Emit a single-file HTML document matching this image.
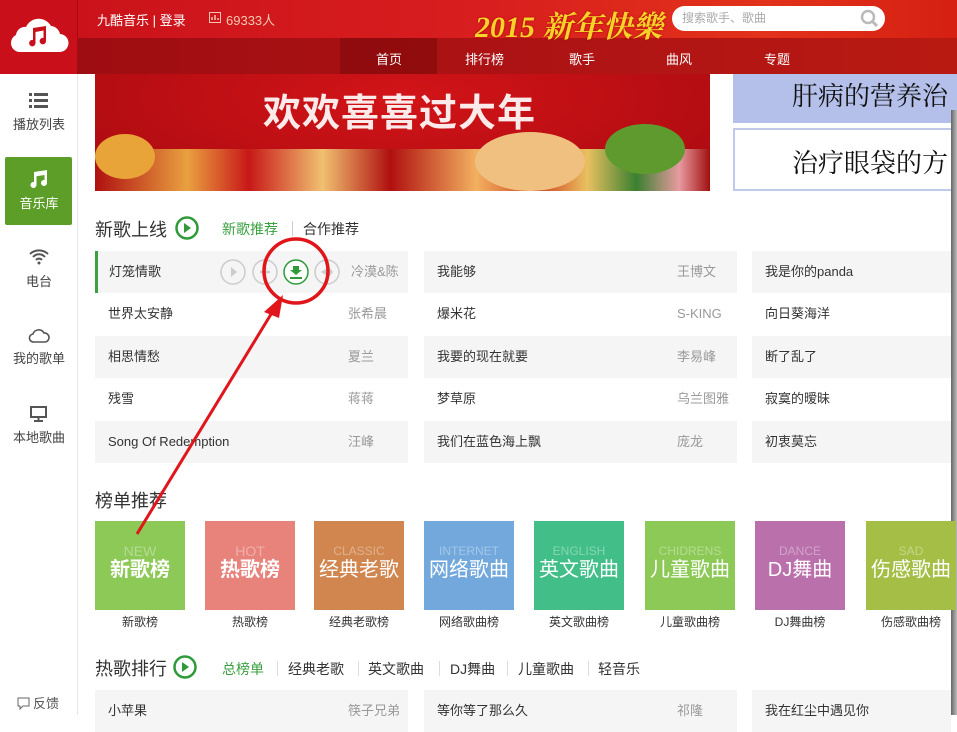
<!DOCTYPE html>
<html><head><meta charset="utf-8"><style>
*{margin:0;padding:0;box-sizing:border-box}
body{width:957px;height:715px;overflow:hidden;background:#fff;font-family:"Liberation Sans","Noto Sans CJK SC",sans-serif;position:relative;font-size:13px;color:#333}
.abs{position:absolute}
.side{left:0;top:74px;width:78px;height:641px;background:#fff;border-right:1px solid #e6e6e6}
.si{position:absolute;left:0;width:78px;text-align:center;font-size:13px;color:#444}
.row{position:absolute;height:42px;font-size:13px;line-height:42px;color:#333}
.row .n{position:absolute;left:13px}
.row .a{position:absolute;color:#999}
.g{background:#f5f5f5}
.tile{position:absolute;top:521px;width:90px;height:89px;color:#fff;text-align:center}
.tile .e{font-size:14px;opacity:.35;margin-top:22px;line-height:16px;letter-spacing:0}
.tile .c{font-size:20px;font-weight:bold;line-height:22px}
.lab{position:absolute;top:613px;width:90px;text-align:center;font-size:12px;color:#333}
.h2{position:absolute;font-size:18px;color:#333}
.tab{position:absolute;font-size:14px;color:#333}
</style></head><body>
<!-- header -->
<div class="abs" style="left:0;top:0;width:957px;height:38px;background:linear-gradient(90deg,#c8101a,#d81e1e 50%,#e2321a 80%,#d52012)"></div>
<div class="abs" style="left:78px;top:38px;width:879px;height:36px;background:linear-gradient(90deg,#9e0d12,#b01414 60%,#b81a12)"></div>
<div class="abs" style="left:0;top:0;width:78px;height:74px;background:#c90f1a;border-right:1px solid #a50c12"></div>
<svg class="abs" style="left:9px;top:16px" width="60" height="38" viewBox="0 0 60 38"><path d="M10 36 A9 9 0 0 1 7 19 A9 9 0 0 1 17 11 A14 14 0 0 1 42 10 A10 10 0 0 1 51 18 A9 9 0 0 1 50 36 Z" fill="#fff"/><path d="M24 12 L37 10 L37 25 A3.2 3.2 0 1 1 34.5 22 L34.5 14.5 L26.5 16 L26.5 27 A3.2 3.2 0 1 1 24 24 Z" fill="#c90f1a"/></svg>
<div class="abs" style="left:97px;top:10px;color:#fff;font-size:13px">九酷音乐 | 登录</div>
<svg class="abs" style="left:209px;top:12px" width="12" height="11"><rect x="0.5" y="0.5" width="11" height="10" stroke="#f4c8b0" fill="none"/><path d="M3 8V5 M6 8V3 M9 8V6" stroke="#f4c8b0" stroke-width="1.5"/></svg>
<div class="abs" style="left:226px;top:10px;color:#f4c8b0;font-size:13px">69333人</div>
<div class="abs" style="left:475px;top:2px;color:#f7d22a;font-size:30px;font-style:italic;font-family:'Liberation Serif','Noto Serif CJK SC',serif;font-weight:bold;text-shadow:0 0 2px #a00">2015 新年快樂</div>
<div class="abs" style="left:672px;top:6px;width:213px;height:25px;background:#fff;border-radius:13px;color:#aaa;font-size:12px;line-height:25px;padding-left:10px">搜索歌手、歌曲</div>
<svg class="abs" style="left:860px;top:9px" width="20" height="20"><circle cx="8" cy="8" r="6" stroke="#bbb" stroke-width="2.5" fill="none"/><path d="M12 12 L17 17" stroke="#bbb" stroke-width="3"/></svg>
<div class="abs" style="left:340px;top:38px;width:97px;height:36px;background:rgba(90,0,0,.3)"></div>
<div class="abs" style="left:376px;top:49px;color:#fff;font-size:13px">首页</div>
<div class="abs" style="left:465px;top:49px;color:#fff;font-size:13px">排行榜</div>
<div class="abs" style="left:569px;top:49px;color:#fff;font-size:13px">歌手</div>
<div class="abs" style="left:666px;top:49px;color:#fff;font-size:13px">曲风</div>
<div class="abs" style="left:764px;top:49px;color:#fff;font-size:13px">专题</div>
<!-- sidebar -->
<div class="abs side"></div>
<svg class="abs" style="left:29px;top:92px" width="20" height="16"><rect x="0" y="1" width="3" height="3" fill="#555"/><rect x="0" y="7" width="3" height="3" fill="#555"/><rect x="0" y="13" width="3" height="3" fill="#555"/><rect x="5" y="1" width="14" height="3" fill="#555"/><rect x="5" y="7" width="14" height="3" fill="#555"/><rect x="5" y="13" width="14" height="3" fill="#555"/></svg>
<div class="si" style="top:114px">播放列表</div>
<div class="abs" style="left:5px;top:157px;width:67px;height:68px;background:#5c9e28;border-radius:2px"></div>
<svg class="abs" style="left:29px;top:169px" width="20" height="20"><path d="M5 3 L18 1 L18 14 A3 3 0 1 1 15.5 11 L15.5 6 L7.5 7.2 L7.5 16 A3 3 0 1 1 5 13 Z" fill="#fff"/></svg>
<div class="si" style="top:193px;color:#fff">音乐库</div>
<svg class="abs" style="left:28px;top:247px" width="22" height="18"><path d="M2 7 A13 13 0 0 1 20 7 M5 10 A8 8 0 0 1 17 10 M8 13 A4 4 0 0 1 14 13" stroke="#555" stroke-width="2" fill="none"/><circle cx="11" cy="16" r="1.5" fill="#555"/></svg>
<div class="si" style="top:271px">电台</div>
<svg class="abs" style="left:28px;top:327px" width="22" height="16"><path d="M6 15 A4 4 0 0 1 5 7 A6 6 0 0 1 16 6 A4.5 4.5 0 0 1 17 15 Z" stroke="#555" stroke-width="1.6" fill="none"/></svg>
<div class="si" style="top:348px">我的歌单</div>
<svg class="abs" style="left:29px;top:405px" width="20" height="18"><rect x="2" y="2" width="15" height="10" stroke="#555" stroke-width="2" fill="none"/><path d="M9.5 12 V15 M5 16 H14" stroke="#555" stroke-width="2"/></svg>
<div class="si" style="top:427px">本地歌曲</div>
<svg class="abs" style="left:17px;top:697px" width="13" height="13"><path d="M1 1 H12 V9 H6 L3 12 V9 H1 Z" stroke="#666" fill="none"/></svg>
<div class="abs" style="left:33px;top:693px;font-size:13px;color:#555">反馈</div>
<!-- banner -->
<div class="abs" style="left:95px;top:74px;width:615px;height:117px;background:radial-gradient(ellipse at 50% 20%,#d21418,#a80a10);overflow:hidden">
<div class="abs" style="left:168px;top:8px;color:#fbeaea;font-size:38px;font-weight:bold;letter-spacing:1px">欢欢喜喜过大年</div>
<div class="abs" style="left:0;top:75px;width:615px;height:42px;background:linear-gradient(90deg,#b01010,#e9a040 15%,#c81818 25%,#f0c070 37%,#b01010 48%,#f2b060 62%,#d04020 72%,#e9c060 80%,#3a8030 88%,#e79aa0 95%,#a01010)"></div>
<div class="abs" style="left:0;top:60px;width:60px;height:45px;border-radius:50%;background:#e8a438"></div>
<div class="abs" style="left:380px;top:58px;width:110px;height:59px;border-radius:50%;background:#f0c080"></div>
<div class="abs" style="left:510px;top:50px;width:80px;height:50px;border-radius:50%;background:#5f9a2e"></div>
</div>
<div class="abs" style="left:733px;top:74px;width:224px;height:49px;background:#b4c0ea"></div>
<div class="abs" style="left:792px;top:76px;font-size:26px;color:#111;font-family:'Liberation Serif','Noto Serif CJK SC',serif;white-space:nowrap">肝病的营养治</div>
<div class="abs" style="left:733px;top:128px;width:224px;height:63px;border:2px solid #c0c8ec;border-right:none"></div>
<div class="abs" style="left:792px;top:143px;font-size:26px;color:#111;font-family:'Liberation Serif','Noto Serif CJK SC',serif;white-space:nowrap">治疗眼袋的方</div>
<div class="abs" style="left:951px;top:110px;width:6px;height:605px;background:linear-gradient(90deg,#666,#bbb)"></div>
<!-- 新歌上线 -->
<div class="h2" style="left:95px;top:216px">新歌上线</div>
<svg class="abs" style="left:174px;top:215px" width="26" height="26"><circle cx="13" cy="13" r="10.5" stroke="#2e9a3a" stroke-width="2.5" fill="none"/><path d="M10 8 L17 13 L10 18Z" fill="#2e9a3a"/></svg>
<div class="tab" style="left:222px;top:219px;color:#3aa040">新歌推荐</div>
<div class="abs" style="left:292px;top:221px;width:1px;height:15px;background:#ccc"></div>
<div class="tab" style="left:303px;top:219px">合作推荐</div>

<div class="row g" style="left:95px;top:251px;width:313px;border-left:3px solid #3aa040"><span class="n" style="left:11px">灯笼情歌</span><span class="a" style="left:253px">冷漠&amp;陈</span></div>
<svg class="abs" style="left:219px;top:257px" width="125" height="30"><circle cx="14" cy="15" r="12" stroke="#ccc" stroke-width="1.5" fill="none"/><path d="M12 10 L18 15 L12 20Z" fill="#ccc"/><circle cx="46" cy="15" r="12" stroke="#ccc" stroke-width="1.5" fill="none"/><path d="M46 10 V20 M41 15 H51" stroke="#ccc" stroke-width="2.5"/><circle cx="77" cy="15" r="12" stroke="#2e9a3a" stroke-width="1.5" fill="#fff"/><path d="M74 9 H80 V13 H83 L77 18 L71 13 H74 Z M71 20 H83 V22 H71Z" fill="#2e9a3a"/><circle cx="108" cy="15" r="12" stroke="#ccc" stroke-width="1.5" fill="none"/><path d="M102 15 L110 10 L114 15 L110 20Z" fill="#ccc"/></svg>
<div class="row" style="left:95px;top:293px;width:313px"><span class="n">世界太安静</span><span class="a" style="left:253px">张希晨</span></div>
<div class="row g" style="left:95px;top:336px;width:313px"><span class="n">相思情愁</span><span class="a" style="left:253px">夏兰</span></div>
<div class="row" style="left:95px;top:378px;width:313px"><span class="n">残雪</span><span class="a" style="left:253px">蒋蒋</span></div>
<div class="row g" style="left:95px;top:421px;width:313px"><span class="n">Song Of Redemption</span><span class="a" style="left:253px">汪峰</span></div>

<div class="row g" style="left:424px;top:251px;width:313px"><span class="n">我能够</span><span class="a" style="left:253px">王博文</span></div>
<div class="row" style="left:424px;top:293px;width:313px"><span class="n">爆米花</span><span class="a" style="left:253px">S-KING</span></div>
<div class="row g" style="left:424px;top:336px;width:313px"><span class="n">我要的现在就要</span><span class="a" style="left:253px">李易峰</span></div>
<div class="row" style="left:424px;top:378px;width:313px"><span class="n">梦草原</span><span class="a" style="left:253px">乌兰图雅</span></div>
<div class="row g" style="left:424px;top:421px;width:313px"><span class="n">我们在蓝色海上飘</span><span class="a" style="left:253px">庞龙</span></div>

<div class="row g" style="left:752px;top:251px;width:199px"><span class="n">我是你的panda</span></div>
<div class="row" style="left:752px;top:293px;width:199px"><span class="n">向日葵海洋</span></div>
<div class="row g" style="left:752px;top:336px;width:199px"><span class="n">断了乱了</span></div>
<div class="row" style="left:752px;top:378px;width:199px"><span class="n">寂寞的暧昧</span></div>
<div class="row g" style="left:752px;top:421px;width:199px"><span class="n">初衷莫忘</span></div>

<!-- 榜单推荐 -->
<div class="h2" style="left:95px;top:487px">榜单推荐</div>
<div class="tile" style="left:95px;background:#8dc957"><div class="e">NEW</div><div class="c">新歌榜</div></div>
<div class="tile" style="left:205px;background:#e8837c"><div class="e">HOT</div><div class="c">热歌榜</div></div>
<div class="tile" style="left:314px;background:#d0864e"><div class="e" style="font-size:12px">CLASSIC</div><div class="c" style="font-weight:normal">经典老歌</div></div>
<div class="tile" style="left:424px;background:#72a8dc"><div class="e" style="font-size:12px">INTERNET</div><div class="c" style="font-weight:normal">网络歌曲</div></div>
<div class="tile" style="left:534px;background:#42bf88"><div class="e" style="font-size:12px">ENGLISH</div><div class="c" style="font-weight:normal">英文歌曲</div></div>
<div class="tile" style="left:645px;background:#8dc957"><div class="e" style="font-size:12px">CHIDRENS</div><div class="c" style="font-weight:normal">儿童歌曲</div></div>
<div class="tile" style="left:755px;background:#b970ab"><div class="e" style="font-size:12px">DANCE</div><div class="c" style="font-weight:normal">DJ舞曲</div></div>
<div class="tile" style="left:866px;background:#a5be45"><div class="e" style="font-size:12px">SAD</div><div class="c" style="font-weight:normal">伤感歌曲</div></div>
<div class="lab" style="left:95px">新歌榜</div><div class="lab" style="left:205px">热歌榜</div><div class="lab" style="left:314px">经典老歌榜</div><div class="lab" style="left:424px">网络歌曲榜</div><div class="lab" style="left:534px">英文歌曲榜</div><div class="lab" style="left:645px">儿童歌曲榜</div><div class="lab" style="left:755px">DJ舞曲榜</div><div class="lab" style="left:866px">伤感歌曲榜</div>

<!-- 热歌排行 -->
<div class="h2" style="left:95px;top:655px">热歌排行</div>
<svg class="abs" style="left:172px;top:654px" width="26" height="26"><circle cx="13" cy="13" r="10.5" stroke="#2e9a3a" stroke-width="2.5" fill="none"/><path d="M10 8 L17 13 L10 18Z" fill="#2e9a3a"/></svg>
<div class="tab" style="left:222px;top:659px;color:#3aa040">总榜单</div>
<div class="tab" style="left:288px;top:659px">经典老歌</div>
<div class="tab" style="left:368px;top:659px">英文歌曲</div>
<div class="tab" style="left:450px;top:659px">DJ舞曲</div>
<div class="tab" style="left:518px;top:659px">儿童歌曲</div>
<div class="tab" style="left:598px;top:659px">轻音乐</div>
<div class="abs" style="left:277px;top:661px;width:1px;height:15px;background:#ddd"></div>
<div class="abs" style="left:358px;top:661px;width:1px;height:15px;background:#ddd"></div>
<div class="abs" style="left:439px;top:661px;width:1px;height:15px;background:#ddd"></div>
<div class="abs" style="left:507px;top:661px;width:1px;height:15px;background:#ddd"></div>
<div class="abs" style="left:588px;top:661px;width:1px;height:15px;background:#ddd"></div>
<div class="row g" style="left:95px;top:690px;width:313px"><span class="n">小苹果</span><span class="a" style="left:253px">筷子兄弟</span></div>
<div class="row g" style="left:424px;top:690px;width:313px"><span class="n">等你等了那么久</span><span class="a" style="left:253px">祁隆</span></div>
<div class="row g" style="left:752px;top:690px;width:199px"><span class="n">我在红尘中遇见你</span></div>

<!-- annotation -->
<svg class="abs" style="left:0;top:0" width="957" height="715"><circle cx="296" cy="271" r="32" stroke="#e0161b" stroke-width="3.5" fill="none"/><path d="M137 534 L276 306" stroke="#e0161b" stroke-width="3"/><path d="M283 295 L264 312 L279 318Z" fill="#e0161b"/></svg>
</body></html>
